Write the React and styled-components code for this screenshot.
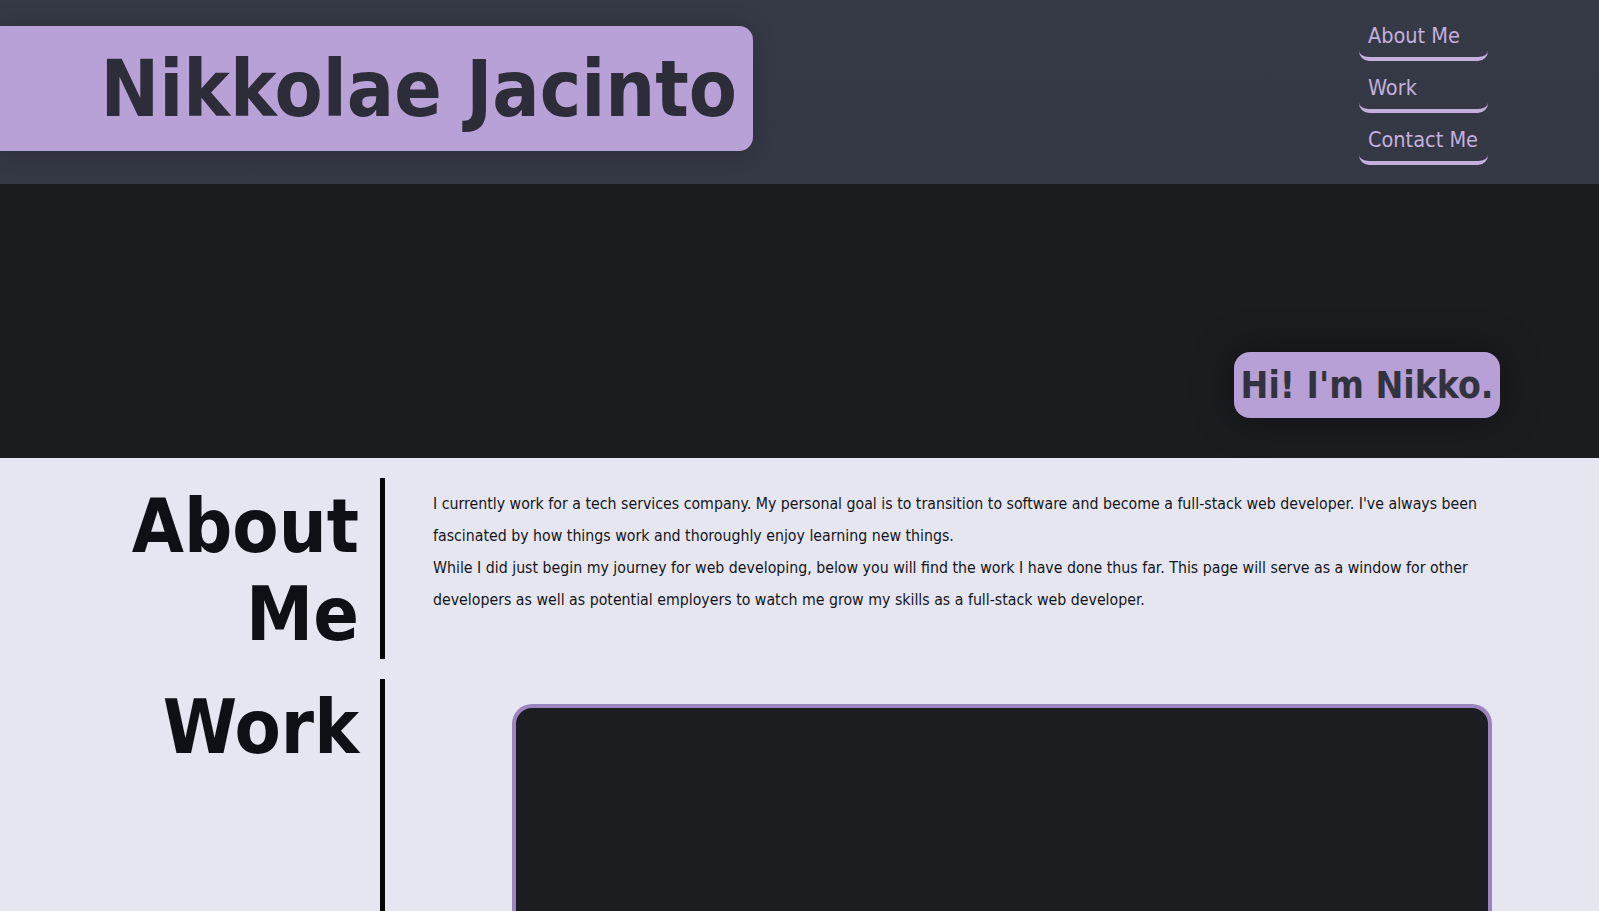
import React from 'react';
import styled, { createGlobalStyle } from 'styled-components';

const GlobalStyle = createGlobalStyle`
  html, body {
    margin: 0;
    padding: 0;
    background: #e6e6f0;
    font-family: Tahoma, "DejaVu Sans", sans-serif;
    font-stretch: condensed;
  }
  * { box-sizing: border-box; }
`

const Header = styled.header`
  height: 184px;
  display: flex;
  justify-content: space-between;
  align-items: flex-start;
  background: linear-gradient(180deg, #363a46 0%, #343744 100%);
  padding-top: 26px;
`

const NameBox = styled.h1`
  margin: 0;
  width: 753px;
  height: 125px;
  display: flex;
  align-items: center;
  justify-content: flex-end;
  padding-right: 16px;
  background: #b8a1d7;
  border-radius: 0 14px 14px 0;
  box-shadow: 0 0 24px rgba(0, 0, 0, 0.15);
  color: #2c2d38;
  font-size: 78px;
  font-weight: bold;
`

const Nav = styled.nav`
  display: flex;
  flex-direction: column;
  gap: 11px;
  margin-right: 111px;
  margin-top: -6px;
`

const NavLink = styled.a`
  display: block;
  width: 129px;
  padding: 0 9px 6px;
  border-bottom: 4px solid #c4b0dd;
  border-radius: 0 0 10px 10px;
  color: #c4b0dd;
  font-size: 21.5px;
  line-height: 31px;
  white-space: nowrap;
  text-decoration: none;
`

const Hero = styled.section`
  height: 274px;
  background: #1b1c20;
  display: flex;
  justify-content: flex-end;
  padding: 168px 99px 0 0;
`

const Greeting = styled.h2`
  margin: 0;
  height: 66px;
  width: 266px;
  display: flex;
  align-items: center;
  justify-content: center;
  background: #b7a0d6;
  border-radius: 16px;
  box-shadow: 0 0 40px rgba(0, 0, 0, 0.35);
  color: #33333f;
  font-size: 37px;
  font-weight: bold;
  white-space: nowrap;
`

const Section = styled.section`
  display: flex;
  margin-top: 20px;
`

const Heading = styled.h2`
  margin: 0;
  width: 380px;
  flex-shrink: 0;
  padding: 4px 21px 0 0;
  text-align: right;
  color: #0f1015;
  font-size: 75px;
  line-height: 88px;
  font-weight: bold;
`

const Content = styled.div`
  flex: 1;
  border-left: 5px solid #060609;
  padding: 0 108px 0 48px;
  min-height: ${p => p.minHeight}px;
`

const Paragraph = styled.p`
  margin: 0;
  padding-top: 10px;
  color: #14151a;
  font-size: 15.75px;
  line-height: 32px;
`

const Screen = styled.div`
  margin: 25px -1px 0 79px;
  height: 260px;
  background: #1c1d21;
  border: 4px solid #9c84c0;
  border-bottom: none;
  border-radius: 20px 20px 0 0;
`

export default function App() {
  return (
    <>
      <GlobalStyle />
      <Header>
        <NameBox>Nikkolae Jacinto</NameBox>
        <Nav>
          <NavLink href="#about">About Me</NavLink>
          <NavLink href="#work">Work</NavLink>
          <NavLink href="#contact">Contact Me</NavLink>
        </Nav>
      </Header>
      <Hero>
        <Greeting>Hi! I'm Nikko.</Greeting>
      </Hero>
      <Section>
        <Heading>About Me</Heading>
        <Content minHeight={181}>
          <Paragraph>
            I currently work for a tech services company. My personal goal is to transition to software and become a full-stack web developer. I've always been fascinated by how things work and thoroughly enjoy learning new things.
            <br />
            While I did just begin my journey for web developing, below you will find the work I have done thus far. This page will serve as a window for other developers as well as potential employers to watch me grow my skills as a full-stack web developer.
          </Paragraph>
        </Content>
      </Section>
      <Section>
        <Heading>Work</Heading>
        <Content minHeight={300}>
          <Screen />
        </Content>
      </Section>
    </>
  )
}
